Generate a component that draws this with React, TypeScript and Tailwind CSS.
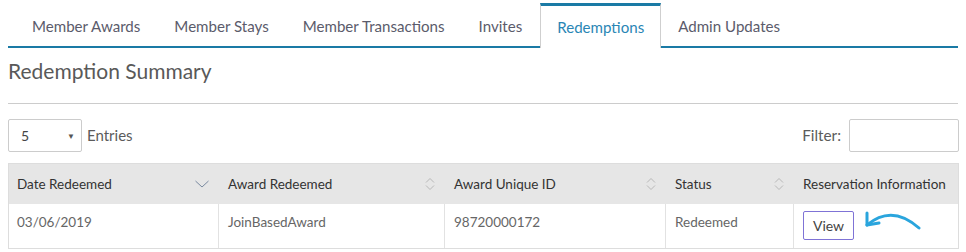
import React from "react";

const tabs = ["Member Awards", "Member Stays", "Member Transactions", "Invites", "Redemptions", "Admin Updates"];

function SortBoth() {
  return (
    <svg width="10" height="14" viewBox="0 0 10 14" fill="none" stroke="#b8b8b8" strokeWidth="1">
      <path d="M1 5.5 L5 1.5 L9 5.5" />
      <path d="M1 8.5 L5 12.5 L9 8.5" />
    </svg>
  );
}

function SortDown() {
  return (
    <svg width="14" height="8" viewBox="0 0 14 8" fill="none" stroke="#7a8aa0" strokeWidth="1">
      <path d="M0.5 1 L7 7 L13.5 1" />
    </svg>
  );
}

export default function App() {
  return (
    <div className="w-[966px] h-[252px] bg-white overflow-hidden text-[#555]" style={{ fontFamily: "Lato, 'Open Sans', sans-serif" }}>
      {/* tabs */}
      <div className="pt-[3px] px-2 flex">
        <div className="flex-1 flex border-b-2 border-[#1a7aa5]">
          <div className="w-[7px]" />
          {tabs.map((t) =>
            t === "Redemptions" ? (
              <div
                key={t}
                className="h-[45px] -mb-[2px] px-[16px] ml-[1px] flex items-center pt-[1px] border-t-[3px] border-t-[#1a7aa5] border-x border-x-[#cfcfcf] bg-white text-[15.1px] text-[#2a86b5]"
              >
                {t}
              </div>
            ) : (
              <div key={t} className="h-[42px] px-[17px] flex items-center pt-[5px] text-[15.1px] text-[#5b5b6b]">
                {t}
              </div>
            )
          )}
        </div>
      </div>

      {/* heading */}
      <div className="px-2">
        <div className="pt-[10px] pb-[19px] border-b border-[#cccccc] text-[21px] text-[#595959] leading-[26px]">
          Redemption Summary
        </div>
      </div>

      {/* controls */}
      <div className="pl-2 pr-[7px] pt-[15px] flex items-center justify-between">
        <div className="flex items-center gap-[5px]">
          <div className="w-[74px] h-[33px] border border-[#cccccc] rounded-[2px] flex items-center justify-between pl-[12px] pr-[6px] text-[14px] text-[#444]">
            <span>5</span>
            <span className="text-[8px] text-[#555]">▼</span>
          </div>
          <span className="text-[15px] text-[#5b5b5b]">Entries</span>
        </div>
        <div className="flex items-center gap-[8px]">
          <span className="text-[15.3px] text-[#5b5b5b]">Filter:</span>
          <div className="w-[110px] h-[33px] border border-[#cccccc] rounded-[2px]" />
        </div>
      </div>

      {/* table */}
      <div className="px-2 pt-[11px] pr-[7px]">
        <div className="border border-[#dddddd] text-[13.5px]">
          <div className="flex h-[40px] bg-[#e6e6e6] text-[#333]">
            <div className="w-[210px] flex items-center justify-between pl-[8px] pr-[10px]">
              <span>Date Redeemed</span>
              <SortDown />
            </div>
            <div className="w-[226px] flex items-center justify-between pl-[9px] pr-[10px]">
              <span>Award Redeemed</span>
              <SortBoth />
            </div>
            <div className="w-[221px] flex items-center justify-between pl-[9px] pr-[10px]">
              <span>Award Unique ID</span>
              <SortBoth />
            </div>
            <div className="w-[128px] flex items-center justify-between pl-[9px] pr-[10px]">
              <span>Status</span>
              <SortBoth />
            </div>
            <div className="flex-1 flex items-center pl-[9px]">
              <span>Reservation Information</span>
            </div>
          </div>
          <div className="flex h-[44px] text-[#666]">
            <div className="w-[210px] border-r border-[#e2e2e2] pl-[8px] pt-[8px]">03/06/2019</div>
            <div className="w-[226px] border-r border-[#e2e2e2] pl-[9px] pt-[8px]">JoinBasedAward</div>
            <div className="w-[221px] border-r border-[#e2e2e2] pl-[9px] pt-[8px]">98720000172</div>
            <div className="w-[128px] border-r border-[#e2e2e2] pl-[9px] pt-[8px]">Redeemed</div>
            <div className="flex-1 flex items-start pl-[9px] pt-[7px] gap-[8px]">
              <button className="w-[51px] h-[29px] border border-[#7f73d6] rounded-[2px] text-[14px] text-[#444] bg-white">
                View
              </button>
              <svg className="-mt-[3px]" width="62" height="26" viewBox="0 0 62 26" fill="none" stroke="#2aa5dd" strokeWidth="3" strokeLinecap="round" strokeLinejoin="round">
                <path d="M5 17 Q 30 -4 57 20" />
                <path d="M5 5 L5 17 L17 15" />
              </svg>
            </div>
          </div>
        </div>
      </div>
    </div>
  );
}
